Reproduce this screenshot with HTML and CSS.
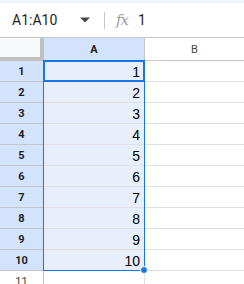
FILE: index.html
```html
<!DOCTYPE html>
<html lang="en">
<head>
  <meta charset="UTF-8" />
  <title>Sheet</title>
  <link rel="stylesheet" href="styles.css">
</head>
<body>

  <div class="top-strip"></div>

  <div class="formula-bar">
    <div class="name-box">
      <span class="range">A1:A10</span>
      <svg class="caret" width="10" height="6" viewBox="0 0 10 5"><path d="M0 0h10L5 5z" fill="#444746"/></svg>
    </div>
    <div class="divider"></div>
    <span class="fx">fx</span>
    <span class="formula">1</span>
  </div>

  <div class="sheet">
    <div class="row head-row">
      <div class="corner"></div>
      <div class="col-head selected">A</div>
      <div class="col-head">B</div>
    </div>
    <div id="rows"></div>
    <div class="row last-row">
      <div class="row-head">11</div>
      <div class="cell"></div>
      <div class="cell"></div>
    </div>

    <!-- selection overlay -->
    <div class="range-box"></div>
    <div class="active-box"></div>
    <div class="handle"></div>
  </div>

<script>
  const rowsDiv = document.getElementById('rows');

  for (let i = 1; i <= 10; i++) {
    const row = document.createElement('div');
    row.className = 'row';
    row.innerHTML = `
      <div class="row-head selected">${i}</div>
      <div class="cell in-range">${i}</div>
      <div class="cell"></div>
    `;
    rowsDiv.appendChild(row);
  }
</script>

</body>
</html>
```

FILE: styles.css
```css
* {
  margin: 0;
  padding: 0;
  box-sizing: border-box;
}

body {
  background-color: #fff;
  font-family: Roboto, 'Liberation Sans', sans-serif;
  color: #1f1f1f;
  overflow: hidden;
}

.top-strip {
  height: 3px;
  background-color: #f0f4f9;
}

.formula-bar {
  height: 35px;
  display: flex;
  align-items: center;
  border-bottom: 1px solid #c4c7c5;
}

.name-box {
  width: 104px;
  display: flex;
  align-items: center;
  justify-content: space-between;
  padding: 0 14px 0 12px;
}

.range {
  font-size: 14px;
  color: #1f1f1f;
}

.divider {
  width: 1px;
  height: 17px;
  background-color: #c4c7c5;
}

.fx {
  margin-left: 11px;
  font-family: 'DejaVu Serif', serif;
  font-style: italic;
  font-size: 15px;
  color: #a0a0a0;
  letter-spacing: -1px;
}

.formula {
  margin-left: 10px;
  font-size: 14px;
}

.sheet {
  position: relative;
}

.row {
  display: flex;
  height: 21px;
}

.head-row {
  height: 23px;
}

.corner {
  width: 44px;
  background-color: #f8f9fa;
  border-right: 4px solid #c0c0c0;
  border-bottom: 4px solid #c0c0c0;
}

.col-head {
  width: 101px;
  display: flex;
  align-items: center;
  justify-content: center;
  font-size: 11px;
  color: #444746;
  border-right: 1px solid #c4c7c5;
  border-bottom: 1px solid #c4c7c5;
}

.col-head:last-child {
  flex: 1;
  border-right: none;
}

.col-head.selected {
  background-color: #d3e3fd;
  color: #0b57d0;
  font-weight: bold;
  color: #1f1f1f;
}

.row-head {
  width: 44px;
  display: flex;
  align-items: center;
  justify-content: center;
  font-size: 11px;
  color: #444746;
  background-color: #f8f9fa;
  border-right: 1px solid #c4c7c5;
  border-bottom: 1px solid #c4c7c5;
}

.row-head.selected {
  background-color: #d3e3fd;
  font-weight: bold;
  color: #1f1f1f;
}

.last-row .row-head {
  background-color: #fff;
  align-items: flex-start;
  padding-top: 4px;
}

.cell {
  width: 101px;
  border-right: 1px solid #e1e1e1;
  border-bottom: 1px solid #e1e1e1;
  font-family: 'Liberation Sans', Arial, sans-serif;
  font-size: 14px;
  text-align: right;
  padding: 3px 4px 0 0;
  color: #000;
}

.cell:last-child {
  flex: 1;
  border-right: none;
}

.cell.in-range {
  background-color: #e7effc;
}

.range-box {
  position: absolute;
  left: 43px;
  top: 22px;
  width: 102px;
  height: 211px;
  border: 1px solid #1a73e8;
}

.active-box {
  position: absolute;
  left: 43px;
  top: 22px;
  width: 102px;
  height: 22px;
  border: 2px solid #1a73e8;
}

.handle {
  position: absolute;
  left: 140px;
  top: 228px;
  width: 8px;
  height: 8px;
  border-radius: 50%;
  background-color: #1a73e8;
  border: 1px solid #fff;
}
```
